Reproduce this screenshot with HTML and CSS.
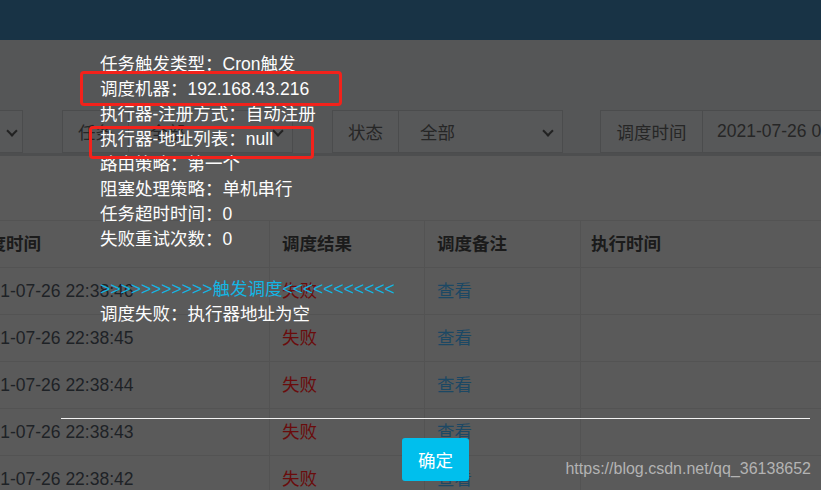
FILE: index.html
```html
<!DOCTYPE html>
<html lang="zh-CN">
<head>
<meta charset="utf-8">
<title>调度日志</title>
<link rel="stylesheet" href="styles.css">
</head>
<body>
<header class="topbar"></header>
<main class="content">
  <div class="filters">
    <div class="fgroup g1"><div class="sel sel-cut"><span class="chev"></span></div></div>
    <div class="fgroup g2"><span class="addon">任务</span><div class="sel"><span>全部</span><span class="chev"></span></div></div>
    <div class="fgroup g3"><span class="addon">状态</span><div class="sel"><span>全部</span><span class="chev"></span></div></div>
    <div class="fgroup g4"><span class="addon addon-wide">调度时间</span><div class="inp">2021-07-26 00:00:00 - 2021-07-26 23:59:59</div></div>
  </div>
  <section class="box">
    <table class="log">
      <colgroup><col class="c1"><col class="c2"><col class="c3"><col class="c4"></colgroup>
      <thead>
        <tr><th>调度时间</th><th>调度结果</th><th>调度备注</th><th class="last">执行时间</th></tr>
      </thead>
      <tbody>
        <tr><td class="time">2021-07-26 22:38:46</td><td class="fail">失败</td><td class="link">查看</td><td></td></tr>
        <tr><td class="time">2021-07-26 22:38:45</td><td class="fail">失败</td><td class="link">查看</td><td></td></tr>
        <tr><td class="time">2021-07-26 22:38:44</td><td class="fail">失败</td><td class="link">查看</td><td></td></tr>
        <tr><td class="time">2021-07-26 22:38:43</td><td class="fail">失败</td><td class="link">查看</td><td></td></tr>
        <tr><td class="time">2021-07-26 22:38:42</td><td class="fail">失败</td><td class="link">查看</td><td></td></tr>
      </tbody>
    </table>
  </section>
</main>
<div class="watermark">https://blog.csdn.net/qq_36138652</div>
<div class="layer">
  <div class="layer-content">
    <div>任务触发类型：Cron触发</div>
    <div>调度机器：192.168.43.216</div>
    <div>执行器-注册方式：自动注册</div>
    <div>执行器-地址列表：null</div>
    <div>路由策略：第一个</div>
    <div>阻塞处理策略：单机串行</div>
    <div>任务超时时间：0</div>
    <div>失败重试次数：0</div>
    <div>&nbsp;</div>
    <div class="trigger">&gt;&gt;&gt;&gt;&gt;&gt;&gt;&gt;&gt;&gt;&gt;触发调度&lt;&lt;&lt;&lt;&lt;&lt;&lt;&lt;&lt;&lt;&lt;</div>
    <div>调度失败：执行器地址为空</div>
  </div>
  <div class="layer-btns"><button class="ok">确定</button></div>
  <span class="mark mark1"></span>
  <span class="mark mark2"></span>
</div>
</body>
</html>
```
FILE: styles.css
```css
html, body {
  margin: 0;
  padding: 0;
  width: 821px;
  height: 490px;
  overflow: hidden;
}
body {
  position: relative;
  background: #555657;
  font-family: "Liberation Sans", "Noto Sans CJK SC", sans-serif;
  font-size: 17.5px;
  color: #222;
}
.topbar {
  height: 40px;
  background: #183345;
}
.content {
  padding-top: 70px;
}
.filters {
  display: flex;
  flex-wrap: nowrap;
  height: 43px;
  white-space: nowrap;
}
.fgroup {
  display: flex;
  flex-shrink: 0;
  height: 43px;
  box-sizing: border-box;
  border: 1px solid #4b4c4d;
  background: #575859;
}
.g1 { margin-left: -1px; width: 24px; }
.g2 { margin-left: 39px; }
.g3 { margin-left: 39px; }
.g4 { margin-left: 37px; width: 300px; overflow: hidden; }
.addon {
  display: flex;
  flex-shrink: 0;
  align-items: center;
  justify-content: center;
  width: 65px;
  border-right: 1px solid #4b4c4d;
  color: #262626;
}
.addon-wide { width: 101px; }
.sel {
  position: relative;
  display: flex;
  flex-shrink: 0;
  align-items: center;
  width: 163px;
  padding-left: 21px;
  box-sizing: border-box;
  color: #262626;
}
.sel-cut { width: 23px; padding: 0; justify-content: center; }
.chev {
  position: absolute;
  right: 10px;
  top: 16px;
  width: 6px;
  height: 6px;
  border-right: 2px solid #222;
  border-bottom: 2px solid #222;
  transform: rotate(45deg);
}
.sel-cut .chev { right: 7px; }
.inp {
  display: flex;
  flex-shrink: 0;
  align-items: center;
  padding-left: 14px;
  color: #262626;
}
.box {
  border-top: 3px solid #4d4e4f;
  background: #5a5a5a;
  padding-top: 64px;
  height: 400px;
}
.log {
  margin-left: -42px;
  border-collapse: collapse;
  table-layout: fixed;
  width: 911px;
  font-family: "Liberation Sans", "Noto Sans CJK SC", sans-serif;
  font-size: 17.5px;
}
.c1 { width: 311px; }
.c2 { width: 155px; }
.c3 { width: 156px; }
.c4 { width: 289px; }
.log th, .log td {
  height: 47px;
  box-sizing: border-box;
  padding: 0 0 0 12px;
  border: 1px solid #535353;
  text-align: left;
  vertical-align: middle;
  white-space: nowrap;
  line-height: 25px;
}
.log th {
  color: #1b1b1b;
  font-weight: bold;
}
.log th.last, .log td:last-child { padding-left: 10px; }
.log td { color: #1e2226; }
.log td.fail { color: #6a0c0c; }
.log td.link { color: #1c4864; }
.watermark {
  position: absolute;
  right: 10px;
  top: 460px;
  font-size: 16px;
  color: #b3b3b3;
  font-family: "Liberation Sans", Arial, sans-serif;
}
.layer {
  position: absolute;
  left: 61px;
  top: 52px;
  width: 749px;
}
.layer-content {
  height: 366px;
  box-sizing: border-box;
  padding-left: 39px;
  line-height: 25px;
  color: #fdfdfd;
}
.trigger { color: #12b6e4; }
.layer-btns {
  border-top: 1px solid #f2f2f2;
  padding-top: 19px;
  display: flex;
  justify-content: center;
}
.ok {
  width: 67px;
  height: 43px;
  border: 0;
  border-radius: 3px;
  background: #00bfed;
  color: #fff;
  font-family: "Liberation Sans", "Noto Sans CJK SC", sans-serif;
  font-size: 17.5px;
  padding: 0;
}
.mark {
  position: absolute;
  box-sizing: border-box;
  border: 3px solid #f3221b;
  border-radius: 4px;
}
.mark1 { left: 19px; top: 19px; width: 262px; height: 35px; }
.mark2 { left: 28px; top: 74px; width: 225px; height: 33px; }
```
